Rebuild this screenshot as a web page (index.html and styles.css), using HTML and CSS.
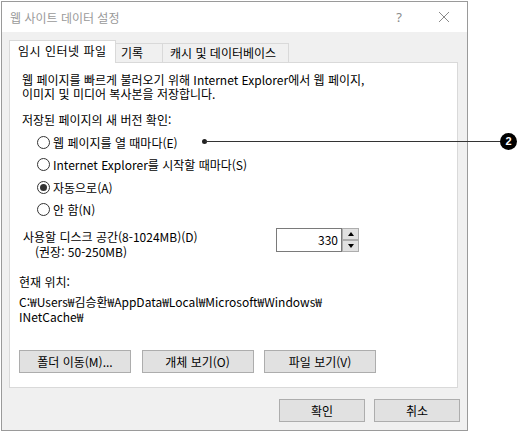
FILE: index.html
```html
<!DOCTYPE html>
<html lang="ko">
<head>
    <meta charset="UTF-8">
    <title>웹 사이트 데이터 설정</title>
    <link rel="stylesheet" href="styles.css">
</head>
<body>
    <div class="window">
        <div class="titlebar">
            <span class="title">웹 사이트 데이터 설정</span>
            <span class="help">?</span>
            <span class="close">
                <svg width="12" height="12" viewBox="0 0 12 12"><path d="M1 1L11 11M11 1L1 11" stroke="#8a8a8a" stroke-width="1" fill="none"/></svg>
            </span>
        </div>
        <div class="dialog-body">
            <div class="tabs">
                <div class="tab active">임시 인터넷 파일</div>
                <div class="tab tab-history">기록</div>
                <div class="tab tab-cache">캐시 및 데이터베이스</div>
            </div>
            <div class="panel">
                <div class="intro">
                    <div>웹 페이지를 빠르게 불러오기 위해 Internet Explorer에서 웹 페이지,</div>
                    <div>이미지 및 미디어 복사본을 저장합니다.</div>
                </div>
                <p class="group-label">저장된 페이지의 새 버전 확인:</p>
                <div class="radio-list">
                    <div class="radio"><span class="radio-mark"></span>웹 페이지를 열 때마다(E)</div>
                    <div class="radio"><span class="radio-mark"></span>Internet Explorer를 시작할 때마다(S)</div>
                    <div class="radio"><span class="radio-mark checked"></span>자동으로(A)</div>
                    <div class="radio"><span class="radio-mark"></span>안 함(N)</div>
                </div>
                <div class="disk-row">
                    <div class="disk-label">
                        <div>사용할 디스크 공간(8-1024MB)(D)</div>
                        <div class="hint">(권장: 50-250MB)</div>
                    </div>
                    <div class="spinner">
                        <div class="spin-value">330</div>
                        <div class="spin-buttons">
                            <div class="spin-btn"><span class="arrow-up"></span></div>
                            <div class="spin-btn"><span class="arrow-down"></span></div>
                        </div>
                    </div>
                </div>
                <p class="location-label">현재 위치:</p>
                <div class="path">
                    <div>C:₩Users₩김승환₩AppData₩Local₩Microsoft₩Windows₩</div>
                    <div>INetCache₩</div>
                </div>
                <div class="panel-buttons">
                    <div class="btn wide">폴더 이동(M)...</div>
                    <div class="btn wide">개체 보기(O)</div>
                    <div class="btn wide">파일 보기(V)</div>
                </div>
            </div>
            <div class="dialog-buttons">
                <div class="btn">확인</div>
                <div class="btn">취소</div>
            </div>
        </div>
    </div>

    <!-- callout marker -->
    <div class="callout">
        <span class="callout-dot"></span>
        <span class="callout-line"></span>
        <span class="callout-badge">2</span>
    </div>
</body>
</html>
```

FILE: styles.css
```css
* {
    box-sizing: border-box;
}
body {
    margin: 1px 0 0 1px;
    background: #ffffff;
    font-family: "Noto Sans CJK KR", "Noto Sans", sans-serif;
    font-size: 12px;
    color: #000000;
}
p {
    margin: 0;
}
.window {
    width: 467px;
    height: 430px;
    border: 1px solid #9a9a9a;
    background: #f0f0f0;
    display: flex;
    flex-direction: column;
}
.titlebar {
    height: 30px;
    background: #ffffff;
    display: flex;
    align-items: center;
    padding-left: 8px;
    color: #9a9a9a;
    font-size: 12px;
}
.title {
    flex: 1;
    line-height: 15px;
}
.help {
    width: 20px;
    text-align: center;
    margin-right: 29px;
    font-family: "Noto Sans", sans-serif;
    font-size: 13px;
    color: #8a8a8a;
}
.close {
    display: flex;
    width: 12px;
    height: 12px;
    margin-right: 17px;
}
.dialog-body {
    flex: 1;
    padding: 8px 9px 0 7px;
    display: flex;
    flex-direction: column;
}
.tabs {
    height: 22px;
    display: flex;
    align-items: flex-end;
}
.tab {
    height: 19px;
    border: 1px solid #d9d9d9;
    border-bottom: none;
    border-left: none;
    background: #f0f0f0;
    line-height: 17px;
    padding-left: 5px;
    white-space: nowrap;
}
.tab.active {
    width: 107px;
    height: 23px;
    margin-bottom: -1px;
    border-left: 1px solid #d9d9d9;
    background: #ffffff;
    padding-left: 8px;
    line-height: 19px;
    letter-spacing: 0.5px;
    position: relative;
    z-index: 1;
}
.tab-history {
    width: 47px;
}
.tab-cache {
    width: 126px;
    padding-left: 7px;
}
.panel {
    height: 326px;
    border: 1px solid #d9d9d9;
    background: #ffffff;
    padding: 10px 0 0 9px;
    line-height: 15px;
}
.intro {
    margin-left: 3px;
    line-height: 14px;
}
.group-label {
    margin-left: 3px;
    margin-top: 11px;
}
.radio-list {
    margin-top: 4px;
}
.radio {
    height: 22.5px;
    display: flex;
    align-items: center;
    padding-left: 18px;
    white-space: nowrap;
}
.radio-mark {
    width: 13px;
    height: 13px;
    border: 1px solid #333333;
    border-radius: 50%;
    margin-right: 3px;
    display: flex;
    align-items: center;
    justify-content: center;
    flex-shrink: 0;
}
.radio-mark.checked::after {
    content: "";
    width: 7px;
    height: 7px;
    border-radius: 50%;
    background: #333333;
}
.disk-row {
    margin-top: 8px;
    display: flex;
    align-items: flex-start;
}
.disk-label {
    width: 257px;
    padding-left: 4px;
}
.hint {
    padding-left: 12px;
}
.spinner {
    display: flex;
    margin-top: -1px;
}
.spin-value {
    width: 66px;
    height: 24px;
    border: 1px solid #7a7a7a;
    text-align: right;
    padding-right: 3px;
    line-height: 22px;
}
.spin-buttons {
    width: 17px;
    height: 24px;
    display: flex;
    flex-direction: column;
    justify-content: center;
}
.spin-btn {
    height: 12px;
    border: 1px solid #adadad;
    background: #e1e1e1;
    display: flex;
    align-items: center;
    justify-content: center;
}
.arrow-up {
    border-left: 3.5px solid transparent;
    border-right: 3.5px solid transparent;
    border-bottom: 4px solid #000000;
}
.arrow-down {
    border-left: 3.5px solid transparent;
    border-right: 3.5px solid transparent;
    border-top: 4px solid #000000;
}
.location-label {
    margin-top: 15px;
}
.path {
    margin-top: 5px;
    white-space: nowrap;
}
.panel-buttons {
    margin-top: 26px;
    display: flex;
    gap: 10.5px;
}
.btn {
    width: 86px;
    height: 23px;
    border: 1px solid #adadad;
    background: #e1e1e1;
    text-align: center;
    line-height: 21px;
    white-space: nowrap;
}
.btn.wide {
    width: 112px;
}
.dialog-buttons {
    margin-top: 11px;
    display: flex;
    justify-content: flex-end;
    gap: 9px;
    margin-right: -2px;
}
.callout {
    position: absolute;
    left: 202px;
    top: 133px;
    width: 315px;
    height: 17px;
}
.callout-dot {
    position: absolute;
    left: 0;
    top: 6px;
    width: 5px;
    height: 5px;
    border-radius: 50%;
    background: #222222;
}
.callout-line {
    position: absolute;
    left: 3px;
    right: 10px;
    top: 8px;
    height: 1px;
    background: #333333;
}
.callout-badge {
    position: absolute;
    right: 0;
    top: 0;
    width: 17px;
    height: 17px;
    border-radius: 50%;
    background: #000000;
    color: #ffffff;
    font-family: "Liberation Sans", sans-serif;
    font-weight: bold;
    font-size: 11px;
    line-height: 17px;
    text-align: center;
}
```
